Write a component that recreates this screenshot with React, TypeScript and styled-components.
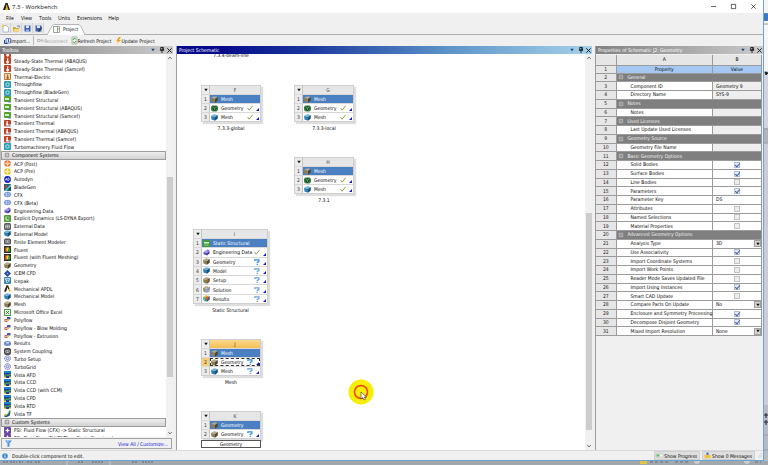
import React from 'react';
import styled, { createGlobalStyle, css } from 'styled-components';

const uiFont = '"DejaVu Sans Condensed", "DejaVu Sans", sans-serif';

const GlobalStyle = createGlobalStyle`
  * { box-sizing: border-box; }
  html, body { margin: 0; padding: 0; overflow: hidden; }
  body { font: 5px/8px ${uiFont}; color: #080808; background: #a3a8ad; }
  button, input, select { font: inherit; color: inherit; margin: 0; padding: 0; border: 0; background: none; border-radius: 0; }
  ul { list-style: none; margin: 0; padding: 0; }
  svg { display: block; flex: none; overflow: visible; }
`;

/* ---------- icons ---------- */

const Glyph = ({ size = 7, children }: { size?: number; children: React.ReactNode }) => (
  <svg width={size} height={size} viewBox="0 0 14 14" aria-hidden="true">{children}</svg>
);

const Cube = ({ top, left, right }: { top: string; left: string; right: string }) => (
  <>
    <path d="M0 4 6 .5 13.5 2 8 6z" fill={top} />
    <path d="M0 4 8 6V13.5L1 11z" fill={left} />
    <path d="M8 6 13.5 2 13.5 9 8 13.5z" fill={right} />
  </>
);

const Thermometer = () => (
  <path d="M6 2.5h2.5v5.2a2.8 2.8 0 1 1-2.5 0z" fill="#fff" />
);

const iconArt: Record<string, React.ReactNode> = {
  thermal: <><rect x="0" y="0" width="14" height="14" rx="2" fill="#bd4526" /><Thermometer /></>,
  electric: <><rect x="0" y="0" width="14" height="14" rx="2" fill="#c07a38" /><rect x="2" y="2" width="10" height="10" rx="1" fill="#f3dcb8" /><path d="M6 3h2.5v4.5a2.5 2.5 0 1 1-2.5 0z" fill="#b06020" /></>,
  flow: <><rect x="0" y="0" width="14" height="14" rx="2" fill="#2b9cb5" /><circle cx="7" cy="7" r="3.5" fill="none" stroke="#e4f7fb" strokeWidth="1.5" /></>,
  tstruct: <><rect x="0" y="0" width="14" height="12" rx="2" fill="#55a231" /><path d="M2 4h8v4H2z" fill="#d4efc4" /><path d="M8 13l3-4 3 4z" fill="#4a77dd" /></>,
  tthermal: <><rect x="0" y="0" width="14" height="13" rx="2" fill="#bd4526" /><path d="M5 2h2.5v5a2.4 2.4 0 1 1-2.5 0z" fill="#fff" /><path d="M9 9h5v5H9z" fill="#fff" /><path d="M9 13l2.500-4 2.500 4z" fill="#4a77dd" /></>,
  acpPost: <><circle cx="7" cy="7" r="6.5" fill="#e57636" /><path d="M1 7h12M7 1v12" stroke="#fbe0d0" strokeWidth="1.4" /><circle cx="7" cy="7" r="3" fill="none" stroke="#fbe0d0" /></>,
  acpPre: <><circle cx="7" cy="7" r="6.5" fill="#e6c626" /><path d="M1 7h12M7 1v12" stroke="#fdf6cc" strokeWidth="1.4" /><circle cx="7" cy="7" r="3" fill="none" stroke="#fdf6cc" /></>,
  autodyn: <><circle cx="7" cy="7" r="6.8" fill="#1423c4" /><path d="M2 9 5 4l2 5M3 7.5h3M8 4v5c4 .5 4-5 0-5" fill="none" stroke="#fff" strokeWidth="1.2" /></>,
  bladegen: <><rect width="14" height="14" fill="#24656e" /><path d="M0 14 14 0v5L5 14z" fill="#57c6d2" /><path d="M1 4 6 2v4L2 9z" fill="#d0392d" /><path d="M9 9l4-2v5z" fill="#14242b" /></>,
  cfx: <><ellipse cx="7" cy="7" rx="7" ry="5.500" fill="#7898d8" /><path d="M3 4.5c3-1 3 5 0 5M8 4c3 0 3 6 0 6M5.5 3.5v7" fill="none" stroke="#e2eafa" strokeWidth="1.2" /></>,
  engdata: <><path d="M1 6 7 2l6 2-5 4z" fill="#a49be0" /><path d="M1 6l7 2v5L1 10.500z" fill="#5c50b6" /><path d="M8 8l5-4v5l-5 4z" fill="#4338a0" /><path d="M8 1l5 1-1 3-4-1z" fill="#8274d6" /></>,
  explicit: <><rect width="14" height="14" rx="2" fill="#4f9b34" /><path d="M4 3v7h6" fill="none" stroke="#fff" strokeWidth="1.8" /><path d="M7 3c3 0 3 3 3 4" fill="none" stroke="#dff3d4" /></>,
  extdata: <><rect width="14" height="14" rx="3" fill="#5b5e62" /><path d="M3 4h8v6H3zM3 7h8M7 4v6" fill="none" stroke="#e2e2e2" strokeWidth="1.1" /></>,
  model: <Cube top="#72b1d6" left="#2f7eb0" right="#174d7c" />,
  fem: <><rect y="1" width="14" height="12" rx="3" fill="#505256" /><path d="M4 4v6M10 4v6M3 4h2M9 4h2M3 10h2M9 10h2M7 4v6" stroke="#f4f4f4" strokeWidth="1.2" /></>,
  fluent: <><rect width="14" height="14" fill="#2c3430" /><path d="M2 3h6l-2 8H2z" fill="#e33b23" /><path d="M5 3h5l1 4-4 4H5z" fill="#e8d725" /><path d="M8 5l4 1v5H8z" fill="#38a83a" /></>,
  geometry: <Cube top="#b5a888" left="#8c7d58" right="#4e452f" />,
  icem: <><path d="M7 0l3.500 3.500L7 7 3.500 3.500zM7 7l3.500 3.500L7 14l-3.500-3.500zM3.500 3.500 7 7l-3.500 3.500L0 7zM10.500 3.500 14 7l-3.500 3.500L7 7z" fill="#274da8" /><circle cx="7" cy="7" r="1.500" fill="#9db6ec" /></>,
  icepak: <><rect width="14" height="14" rx="2" fill="#3d87ac" /><path d="M3 3h8v3H3zM5 6v5M9 6c2 4-2 5-3 5" fill="none" stroke="#e6f4fb" strokeWidth="1.4" /></>,
  apdl: <><path d="M0 13 5 1h2.500L4 13z" fill="#1b1b1b" /><path d="M6.500 1H9l5 12h-4z" fill="#f0b41a" /><path d="M5 1h3l2.500 6-2 2L6.500 4 4 13H2z" fill="#2a2412" /></>,
  excel: <><rect width="14" height="14" rx="1" fill="#4a9c48" /><rect x="2" y="2" width="10" height="10" fill="#e9f5e6" /><path d="M4 4l6 6M10 4l-6 6" stroke="#2e8430" strokeWidth="1.800" /></>,
  polyflow: <><path d="M6 2h7v5H6z" fill="#3a56b0" /><path d="M1 6h6v6H1z" fill="#c5624b" /><path d="M7 7h3v3H7z" fill="#f0c34a" /><path d="M3 8h2v2H3z" fill="#fff" /></>,
  results: <><ellipse cx="7" cy="7" rx="7" ry="5" fill="#5577c6" /><ellipse cx="7" cy="5.500" rx="4" ry="2" fill="#ccd8f4" /><path d="M3 9c3 2 5 2 8 0" stroke="#dce5fa" fill="none" /></>,
  coupling: <><rect width="14" height="14" rx="4" fill="#4c4e52" /><circle cx="5.500" cy="7" r="2.500" fill="none" stroke="#e8e8e8" strokeWidth="1.200" /><circle cx="8.500" cy="7" r="2.500" fill="none" stroke="#e8e8e8" strokeWidth="1.200" /></>,
  turbo: <><circle cx="7" cy="7" r="5.800" fill="#e8eaf8" stroke="#5b68b4" strokeWidth="1.800" strokeDasharray="3 1" /><circle cx="7" cy="7" r="2.500" fill="none" stroke="#5460b0" strokeWidth="1.400" /></>,
  vista: <><rect width="14" height="14" fill="#173f9c" /><path d="M0 0h14v4H0z" fill="#1d87c8" /><path d="M0 8c3-3 6 1 14-3v3c-7 3-10 0-14 3z" fill="#5aa348" /><path d="M0 11h4v3H0zM10 11h4v3h-4z" fill="#e9d63a" /></>,
  vistatf: <><path d="M1 9c6 1 8-2 9-8h3c1 8-3 12-12 12z" fill="#3c9a48" /><path d="M1 11c6 0 9-2 11-7v6c-2 3-6 4-11 4z" fill="#1d4ea0" /><path d="M1 8h5v3H1z" fill="#e4c92e" /></>,
  fsi: <><rect width="14" height="14" rx="2" fill="#6d4ba2" /><path d="M7 2l1.500 3.500L12 7 8.500 8.500 7 12 5.500 8.500 2 7l3.500-1.500z" fill="#fff" /></>,
  struct: <><rect width="14" height="14" rx="2" fill="#479b36" /><path d="M2 4h10v3H2z" fill="#d3efc6" /><path d="M3 9h8v2H3z" fill="#8ccf74" /></>,
  geoDone: <><path d="M2 1h10l2 3v6l-3 3H3L0 10V4z" fill="#2f8a3c" /><path d="M3 4l4-2 4 2v5l-4 3-4-3z" fill="#23402a" /><path d="M4 5l3 1 3-1M7 6v4" stroke="#b9dcbc" fill="none" /></>,
  setup: <><Cube top="#a8a080" left="#7e9a50" right="#5c4a34" /><path d="M7 5h4v6H7z" fill="#c55044" /><path d="M2 8l4 5M4 6l6 7" stroke="#3b6b34" /></>,
  solution: <><Cube top="#b8a882" left="#95845c" right="#63574a" /><path d="M5 5h8v8H5z" fill="#b9cbe6" /><path d="M6 7h6M6 9h6M6 11h6" stroke="#5d7fb6" /></>,
  resultCube: <><Cube top="#e8c83c" left="#3ba35a" right="#2753b4" /><path d="M5 4l5-1 1 5-5 2z" fill="#e2532f" /><path d="M0 5l4 1v4l-3-1z" fill="#52c0d8" /></>,
};

const Icon = ({ name }: { name: string }) => <Glyph>{iconArt[name]}</Glyph>;

const CheckIcon = () => (
  <Glyph size={6}><path d="M1.500 7.500 5 12 13 2" fill="none" stroke="#74902f" strokeWidth="2" /></Glyph>
);
const QuestionIcon = ({ strong }: { strong?: boolean }) => (
  <Glyph size={6}>
    <path d="M2 4.500V2h9.500v4L7.500 8v2" fill="none" stroke={strong ? '#2c8be0' : '#6a9fdc'} strokeWidth="2.800" />
    <rect x="6" y="11.500" width="3" height="2.500" fill={strong ? '#2c8be0' : '#6a9fdc'} />
  </Glyph>
);
const DownTriangle = ({ color = '#111', size = 4 }: { color?: string; size?: number }) => (
  <Glyph size={size}><path d="M1 3h12l-6 8z" fill={color} /></Glyph>
);
const PinIcon = () => (
  <Glyph size={6}><path d="M4 1h6v6H4zM2 7.500h10M7 8v6M9 1v6" fill="none" stroke="#111" strokeWidth="2" /></Glyph>
);
const CloseIcon = ({ size = 5, weight = 2.6 }: { size?: number; weight?: number }) => (
  <Glyph size={size}><path d="M1 1l12 12M13 1 1 13" stroke="#151515" strokeWidth={weight} /></Glyph>
);
const Chevron = ({ up }: { up?: boolean }) => (
  <Glyph size={4}><path d={up ? 'M1 10l6-6 6 6' : 'M1 4l6 6 6-6'} fill="none" stroke="#444" strokeWidth="3" /></Glyph>
);

/* ---------- window frame ---------- */

const Desktop = styled.div`
  height: 100vh; display: grid;
  grid-template: minmax(0, 1fr) 4px / minmax(0, 1fr) 4px;
`;
const Window = styled.main`
  display: flex; flex-direction: column; min-height: 0;
  background: #f0f0f0; border-right: 1px solid #6ba5d6; border-bottom: 1px solid #6ba5d6;
`;
const DesktopEdge = styled.div`
  overflow: hidden;
  background: linear-gradient(#f5f5f5 0 71px, #d4d4de 71px 128px, #b4b4b8 128px 143px, #cdcdd8 143px 405px, #b9bbc2 405px);
`;
const DesktopFoot = styled.div`grid-column: 1 / -1; overflow: hidden; background: #a3a8ad;`;

const TitleBar = styled.header`
  display: flex; align-items: center; gap: 2px; height: 13px; flex: none; padding-left: 3px;
  background: #fff; font: 6px/12px "Open Sans", sans-serif;
`;
const TitleText = styled.h1`flex: 1; margin: 0; font: inherit; color: #111;`;
const WindowControls = styled.div`display: flex;`;
const WindowButton = styled.button`width: 20px; height: 12px; display: grid; place-items: center;`;
const MenuBar = styled.nav`
  display: flex; gap: 6px; align-items: center; height: 10px; flex: none; padding-left: 6px;
  font: 5px/10px "Open Sans", sans-serif; color: #000;
`;
const MenuButton = styled.button<{ $w: number }>`min-width: ${p => p.$w}px; text-align: left;`;
const TabRow = styled.div`
  display: flex; align-items: flex-end; height: 12px; flex: none; border-bottom: 1px solid #aeaeae;
`;
const QuickButton = styled.button`
  width: 11px; height: 10px; display: grid; place-items: center; background: #e7e7e7;
  border-right: 1px solid #d2d2d2; margin-bottom: 1px;
`;
const Tab = styled.button`
  position: relative; width: 38px; height: 10px; margin-left: 3px;
  display: flex; align-items: center; padding-left: 6px;
`;
const TabShape = styled.svg`position: absolute; inset: 0;`;
const TabContent = styled.span`position: relative; display: flex; align-items: center; gap: 3px;`;
const ToolBar = styled.div`
  display: flex; align-items: center; height: 11px; flex: none; padding-left: 4px; gap: 3px;
`;
const ToolButton = styled.button<{ $muted?: boolean }>`
  display: flex; align-items: center; color: ${p => (p.$muted ? '#a4a4a4' : '#080808')};
`;
const Separator = styled.span`width: 1px; height: 9px; background: #bbb;`;

const Workspace = styled.div`
  flex: 1; min-height: 0; display: grid; gap: 3px;
  grid-template-columns: 173px minmax(0, 1fr) 168px;
`;
const Panel = styled.section`
  display: flex; flex-direction: column; min-width: 0; min-height: 0;
  &:not(:first-child) { border-left: 1px solid #9c9c9c; }
`;
const PanelHeader = styled.header<{ $active?: boolean }>`
  display: flex; align-items: center; height: 8px; flex: none; padding: 0 2px; gap: 4px; color: #fff;
  background: ${p => (p.$active
    ? 'linear-gradient(90deg, #06098a 10%, #17349c 30%, #5c93c8 65%, #a6d2ea)'
    : 'linear-gradient(90deg, #818181, #cbcbcb)')};
`;
const PanelTitle = styled.h2`flex: 1; margin: 0; font: inherit; white-space: nowrap;`;
const HeaderButton = styled.button`width: 4px; height: 7px; display: grid; place-items: center;`;
const PanelBody = styled.div`flex: 1; min-height: 0; display: flex;`;

const ScrollTrack = styled.div`
  width: 7px; flex: none; display: flex; flex-direction: column; align-items: center; background: #f1f1f1;
`;
const ScrollButton = styled.button`width: 7px; height: 8px; flex: none; display: grid; place-items: center;`;
const ScrollRail = styled.div<{ $before: number; $thumb: number; $after: number }>`
  flex: 1; width: 6px; display: grid;
  grid-template-rows: ${p => p.$before}fr ${p => p.$thumb}fr ${p => p.$after}fr;
`;
const ScrollThumb = styled.div`grid-row: 2; background: #cdcdcd;`;

const Scrollbar = ({ before, thumb, after }: { before: number; thumb: number; after: number }) => (
  <ScrollTrack>
    <ScrollButton aria-label="Scroll up"><Chevron up /></ScrollButton>
    <ScrollRail $before={before} $thumb={thumb} $after={after}><ScrollThumb /></ScrollRail>
    <ScrollButton aria-label="Scroll down"><Chevron /></ScrollButton>
  </ScrollTrack>
);

const PanelTop = ({ title, active }: { title: string; active?: boolean }) => (
  <PanelHeader $active={active}>
    <PanelTitle>{title}</PanelTitle>
    <HeaderButton aria-label="Panel menu"><DownTriangle color="#1b3c8c" size={4} /></HeaderButton>
    <HeaderButton aria-label="Pin"><PinIcon /></HeaderButton>
    <HeaderButton aria-label="Close"><CloseIcon /></HeaderButton>
  </PanelHeader>
);

/* ---------- toolbox ---------- */

const ToolList = styled.ul`
  flex: 1; min-width: 0; display: flex; flex-direction: column; background: #fff;
  border-left: 1px solid #bdbdbd; overflow: hidden;
`;
const ToolItem = styled.li<{ $partial?: boolean }>`
  flex: ${p => (p.$partial ? 3 : 10)} 1 0; min-height: 0; overflow: hidden;
  display: flex; align-items: ${p => (p.$partial ? 'flex-start' : 'center')}; gap: 3px; padding-left: 3px; white-space: nowrap;
`;
const ScrolledRow = styled.li`
  flex: none; height: 3px; overflow: hidden; display: flex; align-items: flex-end; padding-left: 3px;
`;
const ToolGroup = styled.li`
  flex: none; height: 9px; display: flex; align-items: center; gap: 3px; padding-left: 3px;
  border: 1px solid #9c9c9c; background: linear-gradient(#ededed, #d3d3d3);
`;
const ToolboxFooter = styled.footer`
  flex: none; height: 11px; margin: 1px; padding: 0 3px; display: flex; align-items: center;
  justify-content: space-between; border: 1px solid #a4a4a4;
`;
const Link = styled.a`color: #1414d8; text-decoration: none;`;
const Expander = () => (
  <Glyph size={4}><path d="M1 1h12v12H1zM3.500 7h7" fill="#f6f6f6" stroke="#4d4d4d" strokeWidth="2" /></Glyph>
);

type Tool = [string, string];
const analysisTools: Tool[] = [
  ['thermal', 'Steady-State Thermal (ABAQUS)'], ['thermal', 'Steady-State Thermal (Samcef)'],
  ['electric', 'Thermal-Electric'], ['flow', 'Throughflow'], ['flow', 'Throughflow (BladeGen)'],
  ['tstruct', 'Transient Structural'], ['tstruct', 'Transient Structural (ABAQUS)'],
  ['tstruct', 'Transient Structural (Samcef)'], ['tthermal', 'Transient Thermal'],
  ['tthermal', 'Transient Thermal (ABAQUS)'], ['tthermal', 'Transient Thermal (Samcef)'],
  ['flow', 'Turbomachinery Fluid Flow'],
];
const componentTools: Tool[] = [
  ['acpPost', 'ACP (Post)'], ['acpPre', 'ACP (Pre)'], ['autodyn', 'Autodyn'], ['bladegen', 'BladeGen'],
  ['cfx', 'CFX'], ['cfx', 'CFX (Beta)'], ['engdata', 'Engineering Data'],
  ['explicit', 'Explicit Dynamics (LS-DYNA Export)'], ['extdata', 'External Data'], ['model', 'External Model'],
  ['fem', 'Finite Element Modeler'], ['fluent', 'Fluent'], ['fluent', 'Fluent (with Fluent Meshing)'],
  ['geometry', 'Geometry'], ['icem', 'ICEM CFD'], ['icepak', 'Icepak'], ['apdl', 'Mechanical APDL'],
  ['model', 'Mechanical Model'], ['geometry', 'Mesh'], ['excel', 'Microsoft Office Excel'],
  ['polyflow', 'Polyflow'], ['polyflow', 'Polyflow - Blow Molding'], ['polyflow', 'Polyflow - Extrusion'],
  ['results', 'Results'], ['coupling', 'System Coupling'], ['turbo', 'Turbo Setup'], ['turbo', 'TurboGrid'],
  ['vista', 'Vista AFD'], ['vista', 'Vista CCD'], ['vista', 'Vista CCD (with CCM)'], ['vista', 'Vista CPD'],
  ['vista', 'Vista RTD'], ['vistatf', 'Vista TF'],
];

const ToolRows = ({ tools }: { tools: Tool[] }) => (
  <>{tools.map(([icon, label]) => <ToolItem key={label}><Icon name={icon} />{label}</ToolItem>)}</>
);

const Toolbox = () => (
  <Panel>
    <PanelTop title="Toolbox" />
    <PanelBody>
      <ToolList>
        <ScrolledRow><Icon name="thermal" /></ScrolledRow>
        <ToolRows tools={analysisTools} />
        <ToolGroup><Expander />Component Systems</ToolGroup>
        <ToolRows tools={componentTools} />
        <ToolGroup><Expander />Custom Systems</ToolGroup>
        <ToolItem><Icon name="fsi" />FSI: Fluid Flow (CFX) -&gt; Static Structural</ToolItem>
        <ToolItem $partial><Icon name="fsi" />FSI: Fluid Flow (FLUENT) -&gt; Static Structural</ToolItem>
      </ToolList>
      <Scrollbar before={115} thumb={199} after={52} />
    </PanelBody>
    <ToolboxFooter>
      <Glyph><path d="M0 1h14L9 7v6l-4 1V7z" fill="#4d92e2" /><path d="M3 2h4v4z" fill="#bcdcff" /></Glyph>
      <Link href="#customize">View All / Customize...</Link>
    </ToolboxFooter>
  </Panel>
);

/* ---------- schematic ---------- */

const Canvas = styled.div`position: relative; flex: 1; background: #fff; overflow: hidden;`;
const Node = styled.article<{ $x: number; $y: number; $w: number }>`
  position: absolute; left: ${p => p.$x}px; top: ${p => p.$y}px; width: ${p => p.$w}px;
`;
const NodeBox = styled.div<{ $h: number }>`
  height: ${p => p.$h}px; display: flex; flex-direction: column; background: #fff;
  border: 1px solid #cfcfcf; box-shadow: 2px 2px 1px #dedede;
`;
const numberCell = css`width: 8px; flex: none; display: grid; place-items: center; border-right: 1px solid #c4c4c4;`;
const NodeHead = styled.div<{ $selected?: boolean }>`
  height: 8px; flex: none; display: flex;
  background: ${p => (p.$selected ? 'linear-gradient(#fbd98d, #f2bf55)' : '#e6e6e6')};
`;
const NodeMenu = styled.button`${numberCell} background: #ececec;`;
const NodeLetter = styled.span`flex: 1; text-align: center; color: #444;`;
const NodeRow = styled.div`flex: 1 1 0; min-height: 0; display: flex; border-top: 1px solid #d8d8d8;`;
const RowNumber = styled.span<{ $selected?: boolean }>`
  ${numberCell} color: #333; background: ${p => (p.$selected ? '#f8ce74' : '#ececec')};
`;
const Cell = styled.div<{ $title?: boolean; $focus?: boolean }>`
  flex: 1; min-width: 0; display: flex; align-items: center; padding-left: 1px; white-space: nowrap;
  ${p => p.$title && css`background: #4a80c2; color: #fff;`}
  ${p => p.$focus && css`outline: 1px dashed #333; outline-offset: -1px;`}
`;
const CellText = styled.span`flex: 1; min-width: 0; padding-left: 3px;`;
const Corner = styled.svg`align-self: flex-end; margin: 0 1px 1px 3px;`;
const NodeLabel = styled.p`margin: 2px 0 0; text-align: center; white-space: nowrap;`;
const NodeLabelInput = styled.input`
  display: block; width: 100%; height: 8px; margin-top: 1px; text-align: center;
  background: #fff; border: 1px solid #555;
`;
const Pointer = styled.svg`position: absolute; left: 171px; top: 325px;`;

type Status = 'title' | 'ok' | 'todo' | 'need';
type NodeData = {
  id: string; x: number; y: number; w: number; h: number; label: string;
  rows: [string, string, Status][]; selected?: boolean; editing?: boolean;
};
const meshRows: [string, string, Status][] = [
  ['geometry', 'Mesh', 'title'], ['geoDone', 'Geometry', 'ok'], ['model', 'Mesh', 'ok'],
];
const nodes: NodeData[] = [
  { id: 'F', x: 24, y: 31, w: 60, h: 37, label: '7.3.3-global', rows: meshRows },
  { id: 'G', x: 117, y: 31, w: 60, h: 37, label: '7.3.3-local', rows: meshRows },
  { id: 'H', x: 117, y: 103, w: 60, h: 37, label: '7.3.1', rows: meshRows },
  {
    id: 'I', x: 16, y: 175, w: 75, h: 75, label: 'Static Structural', rows: [
      ['struct', 'Static Structural', 'title'], ['engdata', 'Engineering Data', 'ok'],
      ['geometry', 'Geometry', 'need'], ['model', 'Model', 'todo'], ['setup', 'Setup', 'todo'],
      ['solution', 'Solution', 'todo'], ['resultCube', 'Results', 'todo'],
    ],
  },
  {
    id: 'J', x: 24, y: 285, w: 60, h: 37, label: 'Mesh', selected: true, rows: [
      ['geometry', 'Mesh', 'title'], ['geometry', 'Geometry', 'need'], ['model', 'Mesh', 'todo'],
    ],
  },
  {
    id: 'K', x: 24, y: 357, w: 60, h: 28, label: 'Geometry', editing: true, rows: [
      ['geometry', 'Geometry', 'title'], ['geometry', 'Geometry', 'need'],
    ],
  },
];

const SystemNode = ({ node }: { node: NodeData }) => (
  <Node $x={node.x} $y={node.y} $w={node.w}>
    <NodeBox $h={node.h}>
      <NodeHead $selected={node.selected}>
        <NodeMenu aria-label={`System ${node.id} menu`}><DownTriangle /></NodeMenu>
        <NodeLetter>{node.id}</NodeLetter>
      </NodeHead>
      {node.rows.map(([icon, text, status], i) => (
        <NodeRow key={i}>
          <RowNumber $selected={node.selected && i === 1}>{i + 1}</RowNumber>
          <Cell $title={status === 'title'} $focus={node.selected && i === 1}>
            <Icon name={icon} />
            <CellText>{text}</CellText>
            {status === 'ok' && <CheckIcon />}
            {(status === 'todo' || status === 'need') && <QuestionIcon strong={status === 'need'} />}
            {status !== 'title' && <Corner width="3" height="3" viewBox="0 0 3 3"><path d="M3 0v3H0z" fill="#1717e0" /></Corner>}
          </Cell>
        </NodeRow>
      ))}
    </NodeBox>
    {node.editing
      ? <NodeLabelInput aria-label="System name" defaultValue={node.label} />
      : <NodeLabel>{node.label}</NodeLabel>}
  </Node>
);

const Schematic = () => (
  <Panel>
    <PanelTop title="Project Schematic" active />
    <PanelBody>
      <Canvas>
        <Node $x={24} $y={-5} $w={60}><NodeLabel>7.3.4-beam-line</NodeLabel></Node>
        {nodes.map(n => <SystemNode key={n.id} node={n} />)}
        <Pointer width="26" height="26" viewBox="0 0 26 26">
          <circle cx="13" cy="13" r="12.500" fill="#f8ee00" />
          <circle cx="13" cy="13" r="6.500" fill="none" stroke="#f4420c" strokeWidth="1.600" />
          <path d="M13 13v7l1.700-1.500L16 21l1.500-.7-1.200-2.300h2.200z" fill="#fff" stroke="#333" strokeWidth=".6" />
        </Pointer>
      </Canvas>
      <Scrollbar before={151} thumb={218} after={12} />
    </PanelBody>
  </Panel>
);

/* ---------- properties ---------- */

const PropertyArea = styled.div`flex: 1; padding: 1px 1px 0 0;`;
const PropertyTable = styled.table`
  width: 100%; height: 281px; border-collapse: collapse; table-layout: fixed; line-height: 7px;
  border-bottom: 1px solid #8a8a8a;
  th, td { padding: 0; border-right: 1px solid #9b9b9b; border-bottom: 1px solid #9b9b9b; font-weight: 400; white-space: nowrap; }
`;
const NumberHead = styled.th`width: 20px; background: #e6e6e6; color: #222;`;
const ColumnHead = styled.th<{ $w?: number; $blue?: boolean }>`
  ${p => p.$w && css`width: ${p.$w}px;`}
  background: ${p => (p.$blue ? '#a5c8f2' : '#e6e6e6')};
`;
const HeadRow = styled.tr`height: 10px;`;
const GroupCell = styled.td`background: #7f7f7f; color: #f2f2f2;`;
const GroupContent = styled.div`display: flex; align-items: center; gap: 5px; padding-left: 2px;`;
const NameCell = styled.td`background: #fff; && { padding-left: 14px; }`;
const ValueCell = styled.td<{ $readonly?: boolean }>`background: ${p => (p.$readonly ? '#eeeeee' : '#fff')};`;
const ValueText = styled.span`padding-left: 3px;`;
const CheckBox = styled.input`
  appearance: none; display: block; width: 6px; height: 6px; margin: 0 auto; position: relative;
  border: 1px solid #c2c2c2; background: #ededed;
  &:checked { border-color: #b4bfd2; background: #e6ecf8; }
  &:checked::after {
    content: ''; position: absolute; left: 1px; top: -1px; width: 2px; height: 4px;
    border: solid #3a61b8; border-width: 0 1px 1px 0; transform: rotate(40deg);
  }
`;
const SelectWrap = styled.div`display: grid; grid-template-columns: 1fr 7px; height: 7px;`;
const Select = styled.select`
  appearance: none; grid-area: 1 / 1 / 2 / 3; height: 7px; line-height: 7px; padding-left: 3px; background: transparent;
`;
const SelectArrow = styled.span`
  grid-area: 1 / 2; display: grid; place-items: center; background: #d5d2cb; border: 1px solid #a0a0a0;
  pointer-events: none;
`;

type Prop =
  | { kind: 'group' | 'text' | 'edit' | 'select'; name: string; value?: string }
  | { kind: 'check'; name: string; on: boolean };
const group = (name: string): Prop => ({ kind: 'group', name });
const text = (name: string, value = ''): Prop => ({ kind: 'text', name, value });
const check = (name: string, on = false): Prop => ({ kind: 'check', name, on });
const select = (name: string, value: string): Prop => ({ kind: 'select', name, value });
const properties: Prop[] = [
  group('General'), text('Component ID', 'Geometry 9'), text('Directory Name', 'SYS-9'),
  group('Notes'), text('Notes'), group('Used Licenses'), text('Last Update Used Licenses'),
  group('Geometry Source'), text('Geometry File Name'),
  group('Basic Geometry Options'), check('Solid Bodies', true), check('Surface Bodies', true),
  check('Line Bodies'), check('Parameters', true), { kind: 'edit', name: 'Parameter Key', value: 'DS' },
  check('Attributes'), check('Named Selections'), check('Material Properties'),
  group('Advanced Geometry Options'), select('Analysis Type', '3D'), check('Use Associativity', true),
  check('Import Coordinate Systems'), check('Import Work Points'), check('Reader Mode Saves Updated File'),
  check('Import Using Instances', true), check('Smart CAD Update'), select('Compare Parts On Update', 'No'),
  check('Enclosure and Symmetry Processing', true), check('Decompose Disjoint Geometry', true),
  select('Mixed Import Resolution', 'None'),
];
const EditInput = styled.input`display: block; width: 100%; height: 7px; padding-left: 3px;`;

const PropertyValue = ({ prop, id }: { prop: Prop; id: string }) => {
  if (prop.kind === 'check') return <CheckBox id={id} type="checkbox" defaultChecked={prop.on} />;
  if (prop.kind === 'edit') return <EditInput id={id} defaultValue={prop.value} />;
  if (prop.kind === 'select') {
    return (
      <SelectWrap>
        <Select id={id} defaultValue={prop.value}><option>{prop.value}</option></Select>
        <SelectArrow><DownTriangle size={4} /></SelectArrow>
      </SelectWrap>
    );
  }
  return <ValueText>{prop.value}</ValueText>;
};

const Properties = () => (
  <Panel>
    <PanelTop title="Properties of Schematic J2: Geometry" />
    <PropertyArea>
      <PropertyTable>
        <thead>
          <HeadRow><NumberHead /><ColumnHead>A</ColumnHead><ColumnHead $w={49}>B</ColumnHead></HeadRow>
          <tr><NumberHead>1</NumberHead><ColumnHead $blue>Property</ColumnHead><ColumnHead $blue>Value</ColumnHead></tr>
        </thead>
        <tbody>
          {properties.map((prop, i) => (
            <tr key={i}>
              <NumberHead>{i + 2}</NumberHead>
              {prop.kind === 'group' ? (
                <GroupCell colSpan={2}>
                  <GroupContent>
                    <Glyph size={4}><path d="M1 1h12v12H1zM4 7h6" fill="none" stroke="#dcdcdc" strokeWidth="2" /></Glyph>
                    {prop.name}
                  </GroupContent>
                </GroupCell>
              ) : (
                <>
                  <NameCell>
                    {prop.kind === 'text' ? prop.name : <label htmlFor={`prop-${i}`}>{prop.name}</label>}
                  </NameCell>
                  <ValueCell $readonly={prop.kind === 'text'}><PropertyValue prop={prop} id={`prop-${i}`} /></ValueCell>
                </>
              )}
            </tr>
          ))}
        </tbody>
      </PropertyTable>
    </PropertyArea>
  </Panel>
);

/* ---------- status bar ---------- */

const StatusBar = styled.footer`
  flex: none; height: 10px; display: flex; align-items: center; gap: 2px; padding: 0 1px 0 2px; border-top: 1px solid #dadada;
`;
const StatusText = styled.span`flex: 1; padding-left: 2px;`;
const StatusButton = styled.button`
  height: 9px; display: flex; align-items: center; gap: 1px; padding: 0 2px 0 1px; background: #dfdfdf; border: 1px solid #d0d0d0;
`;

const menus: [string, number][] = [['File', 9], ['View', 12], ['Tools', 13], ['Units', 13], ['Extensions', 24], ['Help', 10]];

export default function App() {
  return (
    <>
      <GlobalStyle />
      <Desktop>
        <Window>
          <TitleBar>
            <Glyph><path d="M0 14 5 0h3L5 14z" fill="#1b1b1b" /><path d="M6 0h3l5 14H9z" fill="#1b1b1b" /><path d="M7 2l4 12H5z" fill="#f0b41a" /></Glyph>
            <TitleText>7.3 - Workbench</TitleText>
            <WindowControls>
              <WindowButton aria-label="Minimize"><Glyph size={5}><path d="M0 7h14" stroke="#222" strokeWidth="2" /></Glyph></WindowButton>
              <WindowButton aria-label="Maximize"><Glyph size={5}><path d="M1 1h12v12H1z" fill="none" stroke="#222" strokeWidth="2" /></Glyph></WindowButton>
              <WindowButton aria-label="Close"><CloseIcon weight={2} /></WindowButton>
            </WindowControls>
          </TitleBar>
          <MenuBar>{menus.map(([m, w]) => <MenuButton key={m} $w={w}>{m}</MenuButton>)}</MenuBar>
          <TabRow>
            <QuickButton aria-label="New"><Glyph><path d="M2 1h7l4 4v9H2z" fill="#fff" stroke="#6d87ad" /><circle cx="2" cy="2" r="2.500" fill="#f6c945" /></Glyph></QuickButton>
            <QuickButton aria-label="Open"><Glyph><path d="M0 4h5l1 2h6v7H0z" fill="#d9a53a" /><path d="M3 8h11l-3 5H0z" fill="#f7d982" /><path d="M8 2h5v3" fill="none" stroke="#4a74b8" strokeWidth="1.500" /></Glyph></QuickButton>
            <QuickButton aria-label="Save"><Glyph><path d="M1 1h12v12H1z" fill="#3f61b4" /><path d="M4 1h6v5H4z" fill="#dfe8fa" /><path d="M4 9h6v4H4z" fill="#a9bde6" /></Glyph></QuickButton>
            <QuickButton aria-label="Save as"><Glyph><path d="M1 1h12v12H1z" fill="#3f61b4" /><path d="M4 1h6v5H4z" fill="#dfe8fa" /><path d="M6 12l7-8 1 2-6 8z" fill="#33312c" /></Glyph></QuickButton>
            <Tab>
              <TabShape width="38" height="11" viewBox="0 0 38 11"><path d="M0 11 5 2Q6 .5 8 .5h23q2 0 3 2L38 11" fill="#fff" stroke="#b5b5b5" /></TabShape>
              <TabContent>
                <Glyph><path d="M1 1h12v12H1zM9 1v12M9 6h4" fill="#fff" stroke="#7c8a78" strokeWidth="1.500" /></Glyph>
                Project
              </TabContent>
            </Tab>
          </TabRow>
          <ToolBar>
            <ToolButton>
              <Glyph><path d="M4 3h9v9H4z" fill="#dbe6f6" stroke="#3f62a8" strokeWidth="1.500" /><path d="M1 6v7h6" fill="none" stroke="#27427e" strokeWidth="2" /><path d="M9 4v6" stroke="#3f62a8" strokeWidth="2" /></Glyph>
              Import...
            </ToolButton>
            <Separator />
            <ToolButton $muted disabled>
              <Glyph><path d="M1 5h5v4H1zM8 4l5 3-3 4M6 7h4" fill="none" stroke="#b4b4b4" strokeWidth="1.800" /></Glyph>
              Reconnect
            </ToolButton>
            <ToolButton>
              <Glyph><path d="M2 0h10v14H2z" fill="#eef7ec" stroke="#6c7f68" /><path d="M4 6c1-4 5-4 6-1M10 8c-1 4-5 4-6 1" fill="none" stroke="#31953a" strokeWidth="2" /></Glyph>
              Refresh Project
            </ToolButton>
            <ToolButton>
              <Glyph><path d="M8 0 2 8h4l-3 6 9-8H8l4-6z" fill="#f0a41e" /></Glyph>
              Update Project
            </ToolButton>
          </ToolBar>
          <Workspace>
            <Toolbox />
            <Schematic />
            <Properties />
          </Workspace>
          <StatusBar>
            <Glyph size={6}><circle cx="7" cy="7" r="6.500" fill="#3d8ad4" /><path d="M7 3v2M7 6v5" stroke="#fff" strokeWidth="2" /></Glyph>
            <StatusText>Double-click component to edit.</StatusText>
            <StatusButton>
              <Glyph><path d="M0 4h14v6H0z" fill="#f8f8f8" stroke="#b0b0b0" /><path d="M1 5h6v4H1z" fill="#4dc25a" /></Glyph>
              Show Progress
            </StatusButton>
            <StatusButton>
              <Glyph><path d="M1 6h12v6H5l-3 2z" fill="#f2c530" /><circle cx="7" cy="3.500" r="2.500" fill="#4770b8" /></Glyph>
              Show 0 Messages
            </StatusButton>
            <Glyph size={5}><path d="M11 2h2M7 6h2M11 6h2M3 11h2M7 11h2M11 11h2" stroke="#a8a8a8" strokeWidth="2" /></Glyph>
          </StatusBar>
        </Window>
        <DesktopEdge>
          <svg width="4" height="461" viewBox="0 0 4 461">
            <circle cx="2" cy="17" r="4" fill="#3d78c4" />
            <path d="M0 24h4M0 129h4M0 143h4M0 435h4M0 450h4" stroke="#9a9aa2" />
            <path d="M1 72l3 1-2 2zM2 413v5M0 415h4M2 420v5M0 422h4" fill="#222" stroke="#222" />
          </svg>
        </DesktopEdge>
        <DesktopFoot>
          <svg width="768" height="4" viewBox="0 0 768 4">
            <path d="M3 1h5m2 0h7m2 0h4m4 0h5m3 0h6M78 1h6m8 0h12M132 1h6m4 0h12" stroke="#5f6a78" strokeDasharray="2 1" />
            <path d="M67 0v4M110 0v4" stroke="#c8ccd0" />
            <path d="M640 0h7v3h-7z" fill="#e8c443" />
            <path d="M650 1h18M675 1h14M755 1h6" stroke="#67717c" strokeDasharray="3 2" />
            <circle cx="697" cy="0" r="3" fill="#c9ccd0" /><circle cx="747" cy="0" r="3" fill="#c9ccd0" />
          </svg>
        </DesktopFoot>
      </Desktop>
    </>
  );
}
